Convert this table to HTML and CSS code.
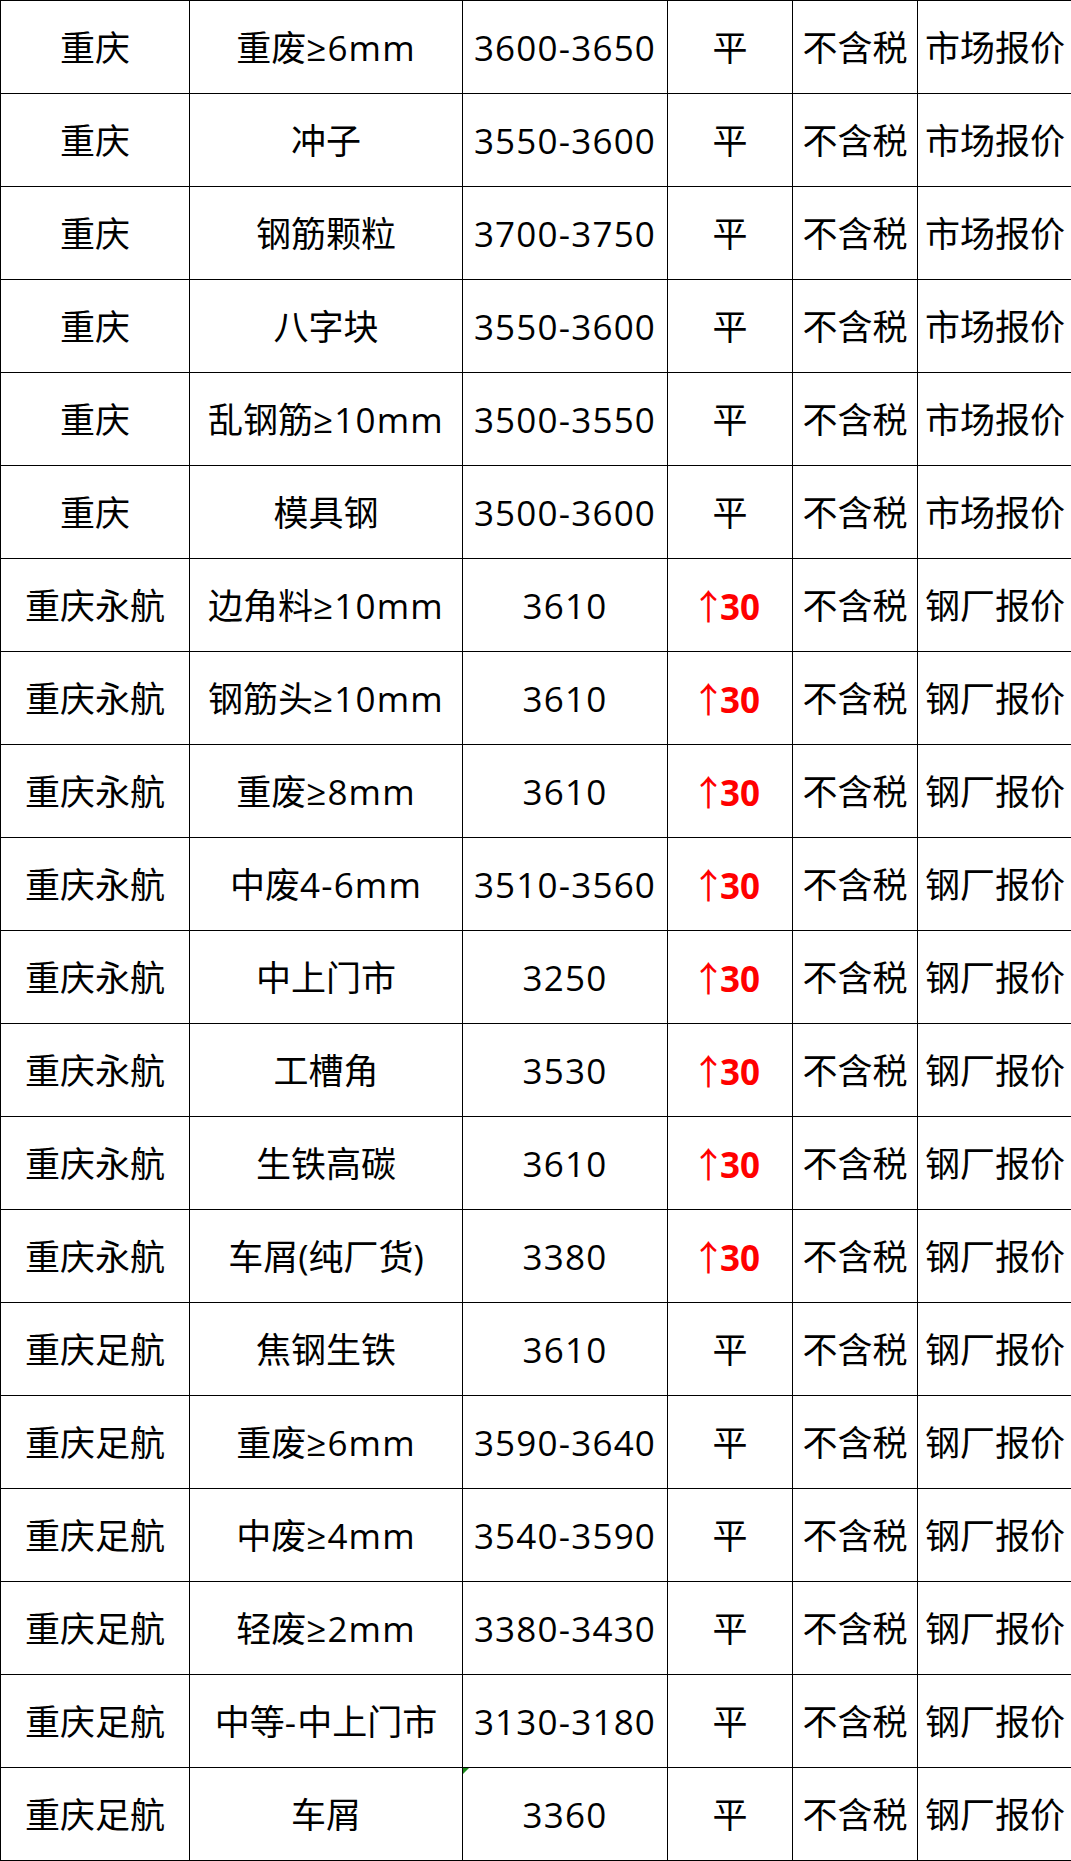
FILE: index.html
```html
<!DOCTYPE html>
<html lang="zh">
<head>
<meta charset="utf-8">
<link rel="stylesheet" href="styles.css">
</head>
<body>
<table class="sheet">
<colgroup>
<col class="c1"><col class="c2"><col class="c3"><col class="c4"><col class="c5"><col class="c6">
</colgroup>
<tbody>
<tr><td>重庆</td><td>重废<span class="lat">≥6mm</span></td><td class="num">3600-3650</td><td>平</td><td>不含税</td><td>市场报价</td></tr>
<tr><td>重庆</td><td>冲子</td><td class="num">3550-3600</td><td>平</td><td>不含税</td><td>市场报价</td></tr>
<tr><td>重庆</td><td>钢筋颗粒</td><td class="num">3700-3750</td><td>平</td><td>不含税</td><td>市场报价</td></tr>
<tr><td>重庆</td><td>八字块</td><td class="num">3550-3600</td><td>平</td><td>不含税</td><td>市场报价</td></tr>
<tr><td>重庆</td><td>乱钢筋<span class="lat">≥10mm</span></td><td class="num">3500-3550</td><td>平</td><td>不含税</td><td>市场报价</td></tr>
<tr><td>重庆</td><td>模具钢</td><td class="num">3500-3600</td><td>平</td><td>不含税</td><td>市场报价</td></tr>
<tr><td>重庆永航</td><td>边角料<span class="lat">≥10mm</span></td><td class="num">3610</td><td class="up"><span class="arr">↑</span>30</td><td>不含税</td><td>钢厂报价</td></tr>
<tr><td>重庆永航</td><td>钢筋头<span class="lat">≥10mm</span></td><td class="num">3610</td><td class="up"><span class="arr">↑</span>30</td><td>不含税</td><td>钢厂报价</td></tr>
<tr><td>重庆永航</td><td>重废<span class="lat">≥8mm</span></td><td class="num">3610</td><td class="up"><span class="arr">↑</span>30</td><td>不含税</td><td>钢厂报价</td></tr>
<tr><td>重庆永航</td><td>中废<span class="lat">4-6mm</span></td><td class="num">3510-3560</td><td class="up"><span class="arr">↑</span>30</td><td>不含税</td><td>钢厂报价</td></tr>
<tr><td>重庆永航</td><td>中上门市</td><td class="num">3250</td><td class="up"><span class="arr">↑</span>30</td><td>不含税</td><td>钢厂报价</td></tr>
<tr><td>重庆永航</td><td>工槽角</td><td class="num">3530</td><td class="up"><span class="arr">↑</span>30</td><td>不含税</td><td>钢厂报价</td></tr>
<tr><td>重庆永航</td><td>生铁高碳</td><td class="num">3610</td><td class="up"><span class="arr">↑</span>30</td><td>不含税</td><td>钢厂报价</td></tr>
<tr><td>重庆永航</td><td>车屑(纯厂货)</td><td class="num">3380</td><td class="up"><span class="arr">↑</span>30</td><td>不含税</td><td>钢厂报价</td></tr>
<tr><td>重庆足航</td><td>焦钢生铁</td><td class="num">3610</td><td>平</td><td>不含税</td><td>钢厂报价</td></tr>
<tr><td>重庆足航</td><td>重废<span class="lat">≥6mm</span></td><td class="num">3590-3640</td><td>平</td><td>不含税</td><td>钢厂报价</td></tr>
<tr><td>重庆足航</td><td>中废<span class="lat">≥4mm</span></td><td class="num">3540-3590</td><td>平</td><td>不含税</td><td>钢厂报价</td></tr>
<tr><td>重庆足航</td><td>轻废<span class="lat">≥2mm</span></td><td class="num">3380-3430</td><td>平</td><td>不含税</td><td>钢厂报价</td></tr>
<tr><td>重庆足航</td><td>中等<span class="lat">-</span>中上门市</td><td class="num">3130-3180</td><td>平</td><td>不含税</td><td>钢厂报价</td></tr>
<tr><td>重庆足航</td><td>车屑</td><td class="num flag">3360</td><td>平</td><td>不含税</td><td>钢厂报价</td></tr>
</tbody>
</table>
</body>
</html>
```

FILE: styles.css
```css
html, body {
  margin: 0;
  padding: 0;
  background: #ffffff;
}
.sheet {
  border-collapse: collapse;
  table-layout: fixed;
  width: 1072px;
  font-family: "Open Sans", "Noto Sans CJK SC", sans-serif;
  font-size: 35px;
  color: #000000;
}
.c1 { width: 189px; }
.c2 { width: 273px; }
.c3 { width: 205px; }
.c4 { width: 125px; }
.c5 { width: 125px; }
.c6 { width: 155px; }
.sheet td {
  border: 1px solid #000000;
  height: 92px;
  padding: 0;
  text-align: center;
  vertical-align: middle;
  white-space: nowrap;
  overflow: hidden;
  line-height: 1;
}
.sheet td.num {
  letter-spacing: 1.2px;
}
.lat {
  letter-spacing: 1.2px;
}
.sheet td.up {
  color: #ff0000;
  font-weight: 700;
}
.arr {
  font-family: "Noto Sans CJK SC", sans-serif;
  font-weight: 400;
  letter-spacing: -6px;
  margin-left: -9px;
}
.flag {
  position: relative;
}
.flag::before {
  content: "";
  position: absolute;
  left: 0;
  top: 0;
  width: 0;
  height: 0;
  border-top: 6px solid #1a8a1a;
  border-right: 6px solid transparent;
}
```
